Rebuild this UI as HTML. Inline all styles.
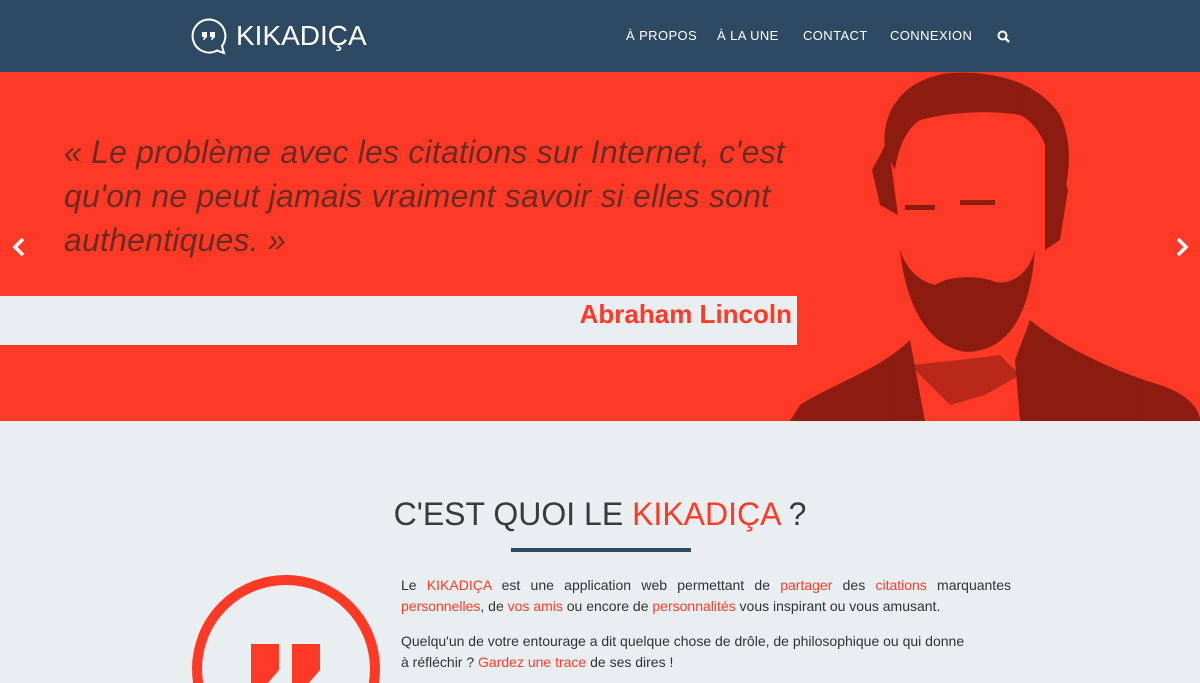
<!DOCTYPE html>
<html><head><meta charset="utf-8"><style>
*{margin:0;padding:0;box-sizing:border-box}
html,body{width:1200px;height:683px;overflow:hidden}
body{background:#e9eef1;font-family:"Liberation Sans",sans-serif;position:relative}
.nav{position:absolute;left:0;top:0;width:1200px;height:72px;background:#2e4a62}
.logo{position:absolute;left:190px;top:17px}
.brand{position:absolute;left:236px;top:20px;color:#fff;font-size:28px}
.menu{position:absolute;top:28px;color:#fff;font-size:13px;letter-spacing:.4px}
.hero{position:absolute;left:0;top:72px;width:1200px;height:349px;background:#fe3a26;overflow:hidden}
.quote{position:absolute;left:64px;top:58px;width:760px;white-space:nowrap;font-style:italic;font-size:32px;line-height:44px;color:#6b2a22;letter-spacing:.2px}
.box{position:absolute;left:0;top:224px;width:797px;height:49px;background:#e9eef0}
.author{position:absolute;right:5px;top:3px;color:#fe3a26;font-weight:bold;font-size:26px}
h2{position:absolute;left:0;width:1200px;top:496px;text-align:center;font-weight:normal;font-size:32px;color:#3a3a3a}
.bar{position:absolute;left:511px;top:548px;width:180px;height:4px;background:#2e4a62}
.txt{position:absolute;left:401px;top:575px;width:610px;font-size:14px;line-height:21px;color:#333;text-align:justify}
.txt p{margin-bottom:14px}
.r{color:#fe3a26}
</style></head><body>
<div class="nav">
<svg class="logo" width="38" height="38" viewBox="0 0 38 38"><path d="M19 2.5A16.5 16.5 0 1 0 27 33.5L34 36 32 29A16.5 16.5 0 0 0 19 2.5Z" fill="none" stroke="#fff" stroke-width="2"/><path d="M12 15h5v5l-3 3h-1l1-3h-2zM20 15h5v5l-3 3h-1l1-3h-2z" fill="#fff"/></svg>
<div class="brand">KIKADIÇA</div>
<div class="menu" style="left:626px">À PROPOS</div>
<div class="menu" style="left:717px">À LA UNE</div>
<div class="menu" style="left:803px">CONTACT</div>
<div class="menu" style="left:890px">CONNEXION</div>
<svg style="position:absolute;left:997px;top:30px" width="13" height="13" viewBox="0 0 13 13"><circle cx="5.5" cy="5.5" r="4" fill="none" stroke="#fff" stroke-width="2"/><path d="M8.5 8.5l3.5 3.5" stroke="#fff" stroke-width="2.4"/></svg>
</div>
<div class="hero">
<svg style="position:absolute;left:0;top:0" width="1200" height="349" viewBox="0 72 1200 349">
<g fill="#5e1008" opacity=".7">
<path d="M885 150C880 110 905 78 950 73 1000 70 1040 85 1060 115 1072 140 1070 170 1065 190L1055 185C1050 150 1040 125 1020 115 990 110 950 112 920 120 905 130 898 150 895 170Z"/>
<path d="M888 140L898 215 880 205 872 170Z"/>
<path d="M1045 120L1068 190 1060 240 1045 250Z"/>
<path d="M900 250C905 300 925 345 965 352 1005 352 1030 320 1035 250 1030 270 1015 285 995 282 980 275 950 275 935 285 915 280 905 265 900 250Z"/>
<path d="M790 421L800 405C830 385 880 370 910 340L925 421Z"/>
<path d="M1030 320C1060 345 1110 370 1160 385 1190 395 1200 410 1200 421L1020 421 1015 360Z"/>
<path d="M910 365 960 360 1000 355 1020 375 985 395 950 405 935 390Z" opacity=".6"/>
<path d="M905 205h30v5h-30zM960 200h35v5h-35z"/>
</g>
</svg>
<div class="quote">« Le problème avec les citations sur Internet, c'est<br>qu'on ne peut jamais vraiment savoir si elles sont<br>authentiques. »</div>
<div class="box"><div class="author">Abraham Lincoln</div></div>
<svg style="position:absolute;left:11px;top:165px" width="16" height="20" viewBox="0 0 16 20"><path d="M12 2L4 10l8 8" fill="none" stroke="#fff" stroke-width="3.5"/></svg>
<svg style="position:absolute;left:1174px;top:165px" width="16" height="20" viewBox="0 0 16 20"><path d="M4 2l8 8-8 8" fill="none" stroke="#fff" stroke-width="3.5"/></svg>
</div>
<h2>C'EST QUOI LE <span class="r">KIKADIÇA</span> ?</h2>
<div class="bar"></div>
<svg style="position:absolute;left:186px;top:570px" width="200" height="113" viewBox="186 570 200 113"><circle cx="286" cy="669" r="89" fill="none" stroke="#fe3a26" stroke-width="10"/><path d="M251 644h28v26l-12 14h-16zM292 644h28v26l-12 14h-16z" fill="#fe3a26"/></svg>
<div class="txt">
<p>Le <span class="r">KIKADIÇA</span> est une application web permettant de <span class="r">partager</span> des <span class="r">citations</span> marquantes <span class="r">personnelles</span>, de <span class="r">vos amis</span> ou encore de <span class="r">personnalités</span> vous inspirant ou vous amusant.</p>
<p>Quelqu'un de votre entourage a dit quelque chose de drôle, de philosophique ou qui donne<br>à réfléchir ? <span class="r">Gardez une trace</span> de ses dires !</p>
</div>
</body></html>
